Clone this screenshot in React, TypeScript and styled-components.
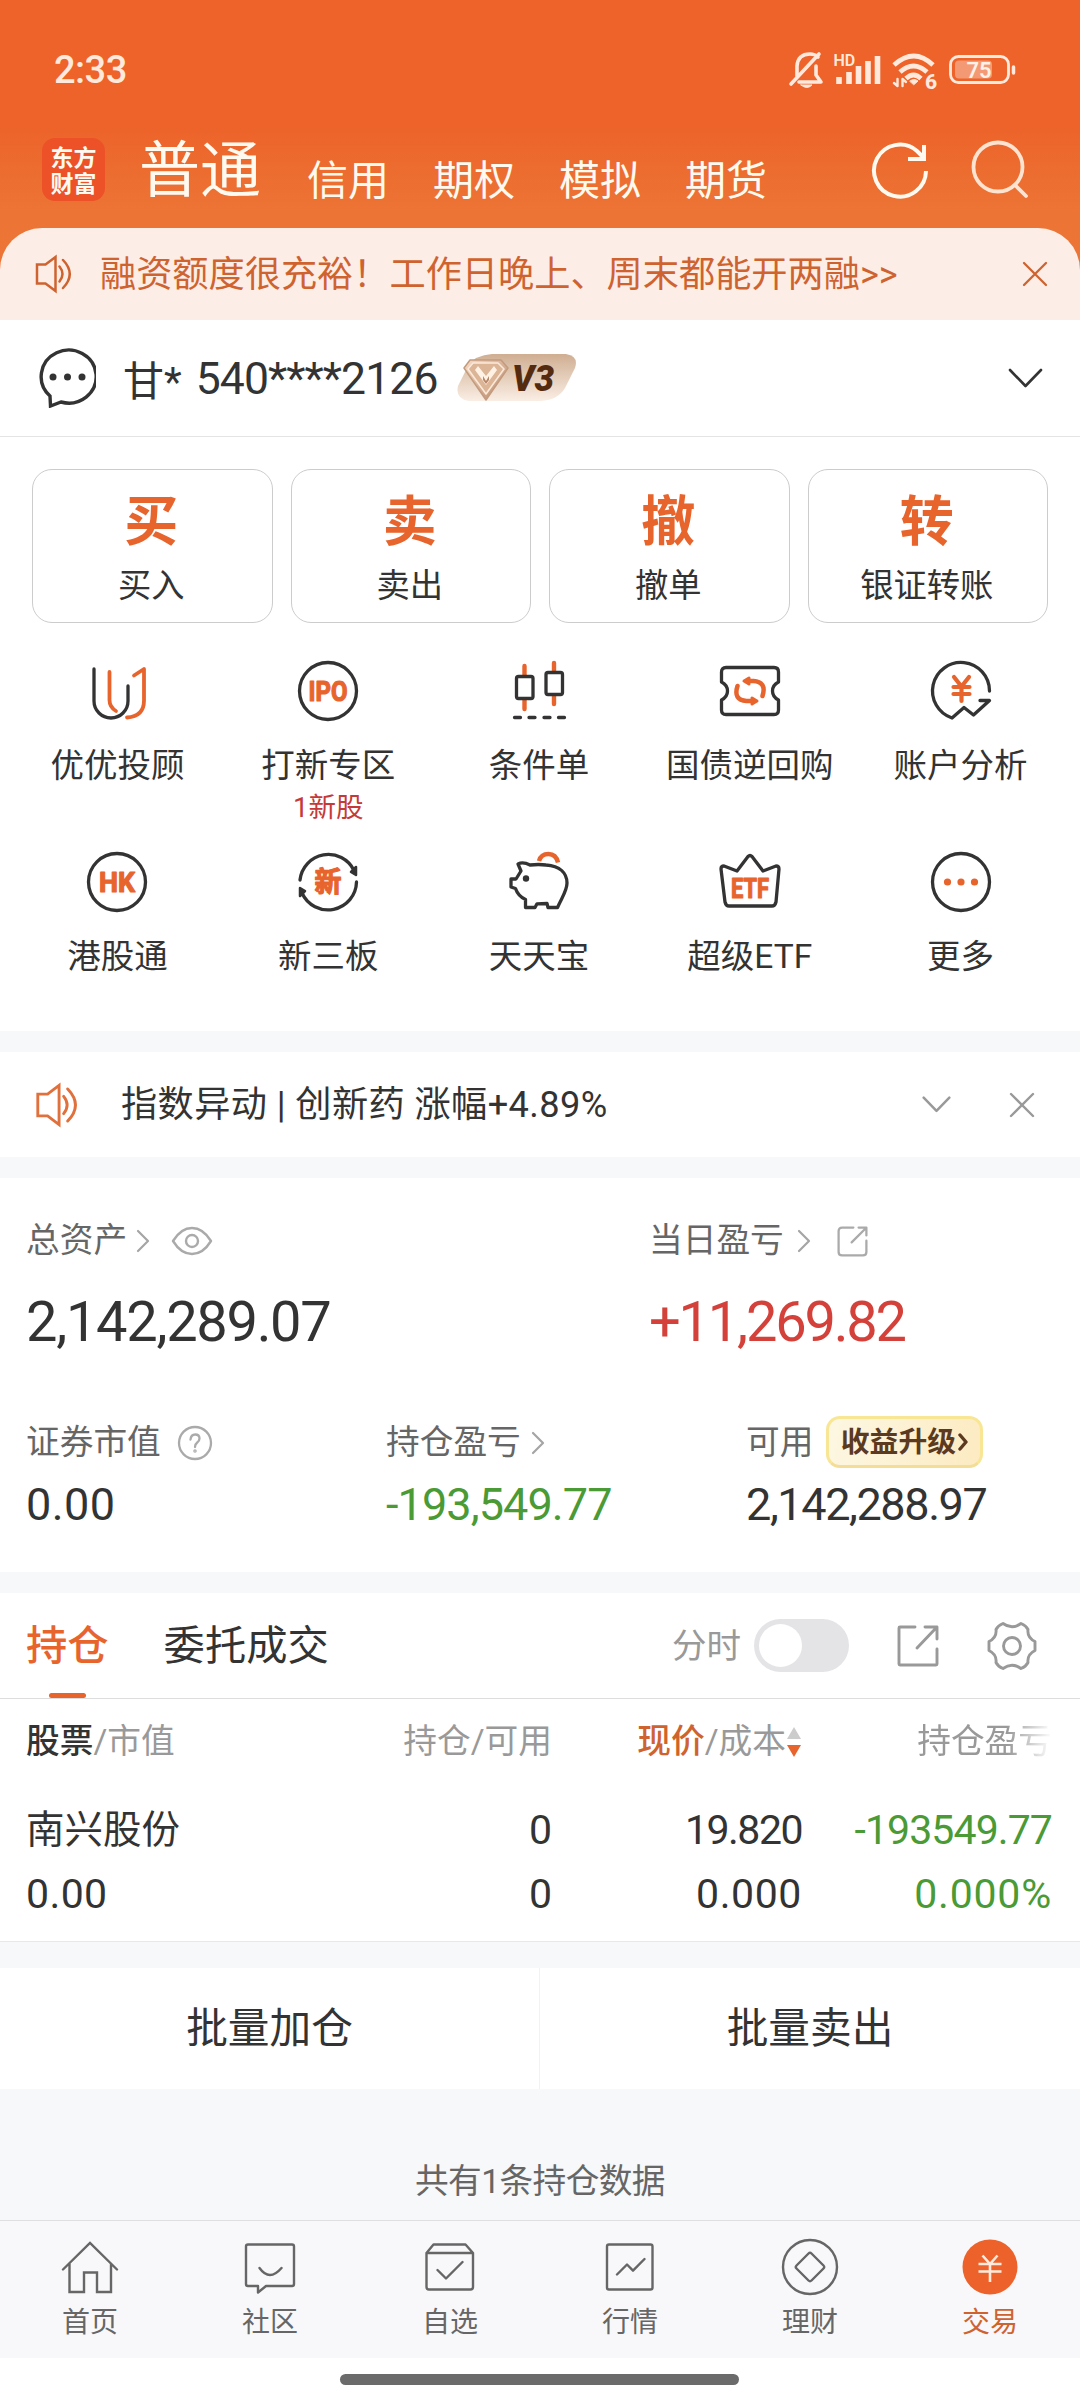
import React from "react";
import styled, { createGlobalStyle, css } from "styled-components";

const INK = "#333333";
const GREY = "#666666";
const LIGHT = "#999999";
const ORANGE = "#e8642d";
const RUST = "#cf6330";
const GREEN = "#4a9a35";
const RED = "#d4413a";
const BAND = "#f7f8fa";

const Global = createGlobalStyle`
  * { box-sizing: border-box; }
  body { margin: 0; background: #fff; }
  svg { display: block; flex: none; }
`;

const Screen = styled.div`
  width: 1080px;
  height: 2400px;
  overflow: hidden;
  display: flex;
  flex-direction: column;
  background: #fff;
  color: ${INK};
  font-family: Roboto, "Noto Sans CJK SC", sans-serif;
`;

/* ---------- header ---------- */

const Header = styled.header`
  height: 320px;
  flex: none;
  display: flex;
  flex-direction: column;
  background: linear-gradient(#ee632a 0, #ed632a 125px, #ec7535 215px, #ed7334 320px);
`;

const StatusBar = styled.div`
  height: 124px;
  padding: 16px 59px 0 54px;
  display: flex;
  align-items: center;
  justify-content: space-between;
  color: #ffe9dc;
`;

const Clock = styled.span`
  font-size: 38px;
  font-weight: 500;
  letter-spacing: -0.5px;
`;

const TopNav = styled.nav`
  height: 104px;
  padding: 0 50px 0 42px;
  display: flex;
  align-items: center;
  color: #fffaf0;
`;

const Logo = styled.div`
  width: 63px;
  height: 63px;
  margin: -14px 34px 0 0;
  border-radius: 13px;
  background: #ec5127;
  display: flex;
  flex-direction: column;
  align-items: center;
  justify-content: center;
`;

const LogoLine = styled.span`
  font: 700 23px/26px "Noto Sans CJK SC", sans-serif;
`;

const MainTab = styled.span`
  width: 168px;
  font-size: 61px;
  line-height: 90px;
  margin-top: -10px;
`;

const SubTab = styled.span`
  width: 126px;
  font-size: 41px;
  line-height: 60px;
  margin-top: 9px;
`;

const TopActions = styled.div`
  margin-left: auto;
  margin-top: -12px;
  display: flex;
  align-items: center;
  gap: 40px;
`;

const Notice = styled.div`
  height: 92px;
  padding: 0 31px 0 34px;
  border-radius: 42px 42px 0 0;
  background: #fceee7;
  color: ${RUST};
  display: flex;
  align-items: center;
`;

const NoticeText = styled.span`
  margin-left: 24px;
  padding-top: 1px;
  flex: 1;
  font-size: 36.2px;
  line-height: 60px;
  white-space: nowrap;
`;

/* ---------- account ---------- */

const AccountRow = styled.div`
  height: 117px;
  flex: none;
  padding: 0 37px 0 36px;
  border-bottom: 1px solid #e4e4e4;
  display: flex;
  align-items: center;
`;

const AccountName = styled.span`
  margin-left: 27px;
  font-size: 41px;
  white-space: pre;
`;

const AccountNumber = styled.span`
  font-size: 44.5px;
  letter-spacing: -0.9px;
  margin: 2px 18px 0 14px;
`;

const Spacer = styled.div`
  flex: 1;
`;

/* ---------- shortcuts ---------- */

const TradeGrid = styled.div`
  flex: none;
  display: grid;
  grid-template-columns: repeat(4, 1fr);
  gap: 18px;
  padding: 32px 32px 0;
`;

const TradeCard = styled.button`
  height: 154px;
  padding: 0 2px 0 0;
  border: 1px solid #cccccc;
  border-radius: 20px;
  background: #fff;
  color: inherit;
  font-family: inherit;
  display: flex;
  flex-direction: column;
  align-items: center;
`;

const TradeGlyph = styled.span`
  margin-top: 19px;
  color: ${ORANGE};
  font-size: 54px;
  font-weight: 700;
  line-height: 68px;
`;

const TradeLabel = styled.span`
  font-size: 33.3px;
  line-height: 58px;
`;

const ToolGrid = styled.div`
  flex: none;
  height: 408px;
  display: grid;
  grid-template-columns: repeat(5, 1fr);
  grid-template-rows: 191px 217px;
  padding: 0 14px 0 12px;
`;

const Tool = styled.div`
  padding-top: 36px;
  display: flex;
  flex-direction: column;
  align-items: center;
`;

const ToolLabel = styled.span`
  margin-top: 18px;
  font-size: 33.5px;
  line-height: 50px;
  white-space: nowrap;
`;

const ToolHint = styled.span`
  color: #c53a38;
  font-size: 27.5px;
  line-height: 34px;
`;

const Band = styled.div<{ $h: number; $line?: boolean }>`
  height: ${(p) => p.$h}px;
  flex: none;
  background: ${BAND};
  ${(p) => p.$line && css`border-top: 1px solid #e6e8ec;`}
`;

/* ---------- news ---------- */

const NewsRow = styled.div`
  height: 105px;
  flex: none;
  padding: 0 44px 0 33px;
  display: flex;
  align-items: center;
`;

const NewsText = styled.span`
  flex: 1;
  margin-left: 37px;
  font-size: 36.2px;
  line-height: 60px;
  letter-spacing: 0.4px;
`;

/* ---------- assets ---------- */

const Assets = styled.section`
  height: 394px;
  flex: none;
  padding: 33px 0 0 26px;
`;

const AssetGrid = styled.div<{ $cols: string; $top?: number }>`
  display: grid;
  grid-template-columns: ${(p) => p.$cols};
  margin-top: ${(p) => p.$top || 0}px;
`;

const FieldLabel = styled.div`
  height: 60px;
  display: flex;
  align-items: center;
  color: ${GREY};
  font-size: 33.7px;
  line-height: 60px;
`;

const Gap = styled.span<{ $w: number }>`
  width: ${(p) => p.$w}px;
`;

const Amount = styled.div<{ $size: number; $h: number; $ls?: number; $color?: string }>`
  font-size: ${(p) => p.$size}px;
  line-height: ${(p) => p.$h}px;
  letter-spacing: ${(p) => p.$ls || 0}px;
  color: ${(p) => p.$color || "inherit"};
  white-space: nowrap;
`;

const Upgrade = styled.span`
  width: 157px;
  height: 52px;
  margin: -2px 0 0 13px;
  border: 3px solid #f8e694;
  border-bottom-color: #f3dd97;
  border-radius: 14px;
  background: linear-gradient(100deg, #fdf7e2, #fcebc2);
  color: #5c3a20;
  font-size: 28.8px;
  font-weight: 700;
  line-height: 46px;
  display: flex;
  align-items: center;
  justify-content: center;
  gap: 2px;
`;

/* ---------- positions ---------- */

const TabBar = styled.div`
  height: 106px;
  flex: none;
  padding: 0 43px 0 26px;
  border-bottom: 1px solid #dddddd;
  display: flex;
  align-items: center;
`;

const Tab = styled.div<{ $active?: boolean }>`
  height: 105px;
  margin-right: 55px;
  padding-top: 12px;
  display: flex;
  flex-direction: column;
  align-items: center;
  justify-content: space-between;
  color: ${(p) => (p.$active ? ORANGE : INK)};
  font-size: 41.3px;
  line-height: 82px;
  font-weight: ${(p) => (p.$active ? 500 : 400)};

  &::after {
    content: "";
    width: 37px;
    height: 5px;
    border-radius: 3px;
    background: ${(p) => (p.$active ? ORANGE : "transparent")};
  }
`;

const TabNote = styled.span`
  color: ${LIGHT};
  font-size: 34.5px;
  line-height: 60px;
`;

const Toggle = styled.div`
  width: 95px;
  height: 53px;
  margin: 0 47px 0 13px;
  padding: 5px;
  border-radius: 27px;
  background: #e4e4e7;

  &::before {
    content: "";
    display: block;
    width: 43px;
    height: 43px;
    border-radius: 50%;
    background: #fff;
  }
`;

const TableRow = styled.div<{ $h: number }>`
  height: ${(p) => p.$h}px;
  padding: 0 28px 0 26px;
  display: grid;
  grid-template-columns: 276px 250px 250px 250px;
  align-items: center;
`;

const TableBody = styled.div`
  padding-top: 14px;
`;

const HeadCell = styled.div<{ $right?: boolean; $fade?: boolean }>`
  display: flex;
  align-items: center;
  justify-content: ${(p) => (p.$right ? "flex-end" : "flex-start")};
  color: ${LIGHT};
  font-size: 33.7px;
  line-height: 60px;
  padding-top: 1px;
  white-space: nowrap;
  ${(p) => p.$fade && css`mask-image: linear-gradient(90deg, #000 82%, transparent 100%);`}
`;

const Strong = styled.span<{ $color: string }>`
  color: ${(p) => p.$color};
  font-weight: 500;
`;

const Cell = styled.div<{ $right?: boolean; $color?: string; $ls?: number; $size?: number }>`
  text-align: ${(p) => (p.$right ? "right" : "left")};
  color: ${(p) => p.$color || INK};
  font-size: ${(p) => p.$size || 41}px;
  line-height: 64px;
  letter-spacing: ${(p) => p.$ls || 0}px;
  white-space: nowrap;
`;

const Positions = styled.section`
  flex: none;
  height: 242px;
`;

const BatchRow = styled.div`
  height: 121px;
  flex: none;
  display: grid;
  grid-template-columns: 540px 540px;
`;

const BatchButton = styled.button`
  border: 0;
  border-right: 1px solid #f2f2f4;
  background: #fff;
  color: ${INK};
  font: 400 41.7px/60px Roboto, "Noto Sans CJK SC", sans-serif;

  &:last-child {
    border-right: 0;
  }
`;

const Summary = styled.div`
  height: 131px;
  flex: none;
  padding-top: 63px;
  background: ${BAND};
  color: ${GREY};
  text-align: center;
  font-size: 33.7px;
  line-height: 60px;
  letter-spacing: -0.6px;
`;

/* ---------- bottom bar ---------- */

const BottomNav = styled.nav`
  height: 138px;
  flex: none;
  border-top: 1px solid #dfdfe2;
  background: #f8f8fa;
  display: grid;
  grid-template-columns: repeat(6, 1fr);
`;

const NavItem = styled.div<{ $active?: boolean }>`
  padding-top: 16px;
  display: flex;
  flex-direction: column;
  align-items: center;
  color: ${(p) => (p.$active ? RUST : GREY)};
  font-size: 28px;
  line-height: 52px;
`;

const HomeArea = styled.div`
  flex: 1;
  display: flex;
  justify-content: center;
  padding: 16px 1px 0 0;

  &::after {
    content: "";
    width: 399px;
    height: 11px;
    border-radius: 6px;
    background: #6b6b6b;
  }
`;

/* ---------- drawings ---------- */

type IconProps = { w: number; h: number; sw?: number; color?: string; box?: string; children: React.ReactNode };

const Icon = ({ w, h, sw = 3, color = "currentColor", box, children }: IconProps) => (
  <svg
    width={w}
    height={h}
    viewBox={box || `0 0 ${w} ${h}`}
    fill="none"
    stroke={color}
    strokeWidth={sw}
    strokeLinecap="round"
    strokeLinejoin="round"
  >
    {children}
  </svg>
);

const StatusIcons = () => (
  <svg width="234" height="56" viewBox="786 42 234 56" fill="none" stroke="#ffe9dc" strokeLinecap="round" strokeLinejoin="round">
    <path d="M796 77V66q1-12 13-12 5 0 8 3M790 84l28-30M798 82h22l-5-7V66" strokeWidth="3.6" />
    <path d="M800 85h11q-5 5-11 0z" fill="#ffe9dc" strokeWidth="1" />
    <text x="832.5" y="66" fill="#ffe9dc" stroke="none" fontFamily="Roboto, sans-serif" fontSize="16" fontWeight="600">HD</text>
    <g strokeWidth="5.600" strokeLinecap="butt">
      <path d="M838 84v-7M848 84V72M857.500 84V66M867 84V61M876.500 84V56" />
    </g>
    <path d="M893 65q20-18 39 0M899 72q13.500-12 27 0M905 78.500q7.500-7 15 0" strokeWidth="4.800" strokeLinecap="butt" />
    <path d="M909 81q4-3 8 0l-4 3.500z" fill="#ffe9dc" strokeWidth="1" />
    <path d="M896.500 79v7l-3.500-3M901.500 86v-7l3.500 3" strokeWidth="2.400" />
    <text x="924" y="89" fill="#ffe9dc" stroke="#ed632a" strokeWidth="1.500" paintOrder="stroke" fontFamily="Roboto, sans-serif" fontSize="21" fontWeight="800">6</text>
    <rect x="949.500" y="56.500" width="58" height="26" rx="8" strokeWidth="2.800" />
    <rect x="954" y="60.500" width="37" height="18" rx="4" fill="#f39a74" stroke="none" />
    <text x="965.500" y="78" fill="#fff1e8" stroke="none" fontFamily="Roboto, sans-serif" fontSize="22" fontWeight="600">75</text>
    <path d="M1012.500 67v6" strokeWidth="3.500" />
  </svg>
);

const Speaker = ({ w, h, color }: { w: number; h: number; color: string }) => (
  <Icon w={w} h={h} box="0 0 42 40" sw={2.5} color={color}>
    <path d="M3 10.500h8.500L21.500 3v34l-10-7.500H3zM25.500 12.500q6 7.500 0 15M29 6q13.500 14 0 28" strokeLinejoin="miter" />
  </Icon>
);

const Cross = ({ size, sw, color }: { size: number; sw: number; color: string }) => (
  <Icon w={size} h={size} box="0 0 28 28" sw={sw} color={color}>
    <path d="M3 3l22 22M25 3L3 25" />
  </Icon>
);

const ChevronDown = ({ w, color, sw }: { w: number; color: string; sw: number }) => (
  <Icon w={w} h={w * 0.6} box="0 0 35 21" sw={sw} color={color}>
    <path d="M2 2l15.500 16L33 2" />
  </Icon>
);

const ChevronRight = () => (
  <Icon w={15} h={24} sw={2.2} color="#a5a5a5">
    <path d="M2 2l10 10L2 22" />
  </Icon>
);

const Gem = () => (
  <svg width="122" height="50" viewBox="0 0 122 50">
    <defs>
      <linearGradient id="gold" x1="0" y1="0" x2="0" y2="1">
        <stop offset="0" stopColor="#cfae91" />
        <stop offset="1" stopColor="#faeee4" />
      </linearGradient>
      <linearGradient id="gem" x1="0" y1="0" x2="1" y2="1">
        <stop offset="0" stopColor="#f7dcc6" />
        <stop offset="1" stopColor="#b98767" />
      </linearGradient>
    </defs>
    <path d="M36 1h74q13 2 9 14l-10 20q-7 12-24 13H13Q-1 46 2 33L12 13Q19 2 36 1z" fill="url(#gold)" />
    <path d="M14 7h31l7 8-22 32L8 15z" fill="url(#gem)" stroke="#c39b7f" strokeWidth="1.500" strokeLinejoin="round" />
    <path d="M17 10h25l6 6-18 25L12 16z" fill="#dcb496" stroke="#fbe9da" strokeWidth="1.600" strokeLinejoin="round" />
    <path d="M22 13l8 10 8-10 3 4-11 15-11-15z" fill="#fff2e5" />
    <path d="M27 23l3 5 3-5v4l-3 4-3-4z" fill="#b98767" />
    <text x="56" y="37.500" fill="#552b10" fontFamily="Roboto, sans-serif" fontStyle="italic" fontWeight="900" fontSize="37" textLength="42" lengthAdjust="spacingAndGlyphs">V3</text>
  </svg>
);

const share = "M20 3H7Q3 3 3 7v24q0 4 4 4h24q4 0 4-4V18M26 3h9v9M34 4L18 20";

const Share = ({ size, sw, color }: { size: number; sw: number; color: string }) => (
  <Icon w={size} h={size} box="0 0 38 38" sw={sw} color={color}>
    <path d={share} />
  </Icon>
);

const Badge = ({ text, width, size = 28, y = 42 }: { text: string; width: number; size?: number; y?: number }) => (
  <text
    x="32"
    y={y}
    textAnchor="middle"
    textLength={width}
    lengthAdjust="spacingAndGlyphs"
    fill={ORANGE}
    stroke={ORANGE}
    strokeWidth="1.2"
    fontFamily='Roboto, "Noto Sans CJK SC", sans-serif'
    fontWeight="700"
    fontSize={size}
  >
    {text}
  </text>
);

const Ring = () => <circle cx="32" cy="32" r="28.500" />;

const toolArt: Record<string, React.ReactNode> = {
  advisor: (
    <>
      <path d="M9 10v32a17 17 0 0 0 34 0V27" />
      <g stroke={ORANGE} strokeWidth="3.800">
        <path d="M24.500 13v28q0 7 6.500 11M42 58.500q17-1 17-17V10l-10 6.500" />
      </g>
    </>
  ),
  ipo: (<><Ring /><Badge text="IPO" width={39} /></>),
  candles: (
    <>
      <path d="M17.500 7v9M17.500 41v9M47 4v8M47 37v8" stroke={ORANGE} strokeWidth="4.400" />
      <rect x="9.500" y="17.500" width="16.500" height="22" rx="2" />
      <rect x="39" y="13.500" width="16.500" height="22" rx="2" />
      <path d="M7.500 58.500h6M22 58.500h6M37 58.500h6M51.500 58.500h6" />
    </>
  ),
  repo: (
    <>
      <path d="M8 8.500h48q4.500 0 4.500 4.500v10q-6 3-6 9t6 9v10q0 4.500-4.500 4.500H8Q3.500 55.500 3.500 51V41q6-3 6-9t-6-9V13Q3.500 8.500 8 8.500z" />
      <g stroke={ORANGE} strokeWidth="4.500">
        <path d="M19.500 27q-4.500 14 9 15h7M44.500 37q4.500-14-9-15h-6" />
        <path d="M31 19v6l-5-3zM34 39v6l5-3z" fill={ORANGE} strokeWidth="3" />
      </g>
    </>
  ),
  analysis: (
    <>
      <path d="M60.500 32A28.500 28.500 0 1 0 23 59l12-10.500 9.500 7.500L60.500 41.500H51" />
      <path d="M25 18l7.500 9.500L40 18M32.500 28v14M24.500 28h16M24.500 35h16" stroke={ORANGE} strokeWidth="4.200" />
    </>
  ),
  hk: (<><Ring /><Badge text="HK" width={36} /></>),
  neeq: (
    <>
      <path d="M4 30A28.500 28.500 0 0 1 58 20.500M60.500 32A28.500 28.500 0 0 1 6 43" />
      <path d="M60 17v8l-5-3zM4 46v-8l5 3z" fill={INK} strokeWidth="2.500" />
      <Badge text="新" width={27} size={28} y={42} />
    </>
  ),
  piggy: (
    <>
      <path d="M11 14q5-2.500 12 1 9-1 16 0c14 1 21 8 21 18 0 8-5 14-9.500 24.500H41l-1-4-10 .3-2 3.700h-9.500v-8Q11 46 8.500 38.500L4 37v-8h5l5-8z" />
      <circle cx="19" cy="28.500" r="3.200" fill={INK} stroke="none" />
      <path d="M32 11q2-7 9.500-7T51 12.500" stroke={ORANGE} strokeWidth="4.500" strokeLinecap="butt" />
    </>
  ),
  etf: (
    <>
      <path d="M30 6.500q2-2 4 0l11 14.500 13-5q3 0 3 3L58 52q-1 4-4 4H11q-3 0-4-4L3 19q0-3 3-3l13 5z" />
      <Badge text="ETF" width={38} y={47.500} size={27} />
    </>
  ),
  more: (
    <>
      <Ring />
      <g fill={ORANGE} stroke="none">
        <circle cx="18.500" cy="32" r="3.600" />
        <circle cx="32" cy="32" r="3.600" />
        <circle cx="45.500" cy="32" r="3.600" />
      </g>
    </>
  ),
};

const tools = [
  { art: "advisor", label: "优优投顾" },
  { art: "ipo", label: "打新专区", hint: "1新股" },
  { art: "candles", label: "条件单" },
  { art: "repo", label: "国债逆回购" },
  { art: "analysis", label: "账户分析" },
  { art: "hk", label: "港股通" },
  { art: "neeq", label: "新三板" },
  { art: "piggy", label: "天天宝" },
  { art: "etf", label: "超级ETF" },
  { art: "more", label: "更多" },
];

const trades = [
  ["买", "买入"],
  ["卖", "卖出"],
  ["撤", "撤单"],
  ["转", "银证转账"],
];

const navs: { label: string; active?: boolean; art: React.ReactNode }[] = [
  { label: "首页", art: <path d="M3 32.500L30 6l27 26.500M9.500 27v28H24V35.500h13V55h14V27" strokeLinejoin="miter" /> },
  { label: "社区", art: <path d="M8 7.500h44q2 0 2 2V47q0 2-2 2H26l-8 6.500V49H8q-2 0-2-2V9.500q0-2 2-2zM19.500 31q10 14 22 0" /> },
  { label: "自选", art: <path d="M6.500 16l7-8.500h32l7.500 8.500v34q0 2.500-2.500 2.500H9Q6.500 52.500 6.500 50zh46M17.500 33l8.500 8.500L42.500 25" /> },
  { label: "行情", art: <path d="M9 7.500h41.500q2 0 2 2v41q0 2-2 2H9q-2 0-2-2v-41q0-2 2-2zM17 37.500l10-10 6 6.200L44.500 22" /> },
  { label: "理财", art: <><circle cx="30" cy="30" r="27" /><path d="M28.500 16.500q1.500-1.500 3 0l12 12q1.500 1.500 0 3l-12 12q-1.500 1.500-3 0l-12-12q-1.500-1.500 0-3z" /></> },
  {
    label: "交易",
    active: true,
    art: (
      <>
        <circle cx="30" cy="30" r="27.500" fill="#ec622a" stroke="none" />
        <path d="M22.500 18.500L30 27l7.500-8.500M30 27v18M18.500 27h23M18.500 34.500h23" stroke="#ffeadd" strokeWidth="2.600" strokeLinecap="butt" />
      </>
    ),
  },
];

export default function App() {
  return (
    <Screen>
      <Global />
      <Header>
        <StatusBar>
          <Clock>2:33</Clock>
          <StatusIcons />
        </StatusBar>
        <TopNav>
          <Logo>
            <LogoLine>东方</LogoLine>
            <LogoLine>财富</LogoLine>
          </Logo>
          <MainTab>普通</MainTab>
          {["信用", "期权", "模拟", "期货"].map((t) => (
            <SubTab key={t}>{t}</SubTab>
          ))}
          <TopActions>
            <Icon w={60} h={60} sw={4}>
              <path d="M56 31A26 26 0 1 1 47 11l7 7M54 5v14H38" strokeLinecap="butt" strokeLinejoin="miter" />
            </Icon>
            <Icon w={60} h={60} sw={3.8} color="#fde3d0">
              <circle cx="28" cy="27" r="24.500" />
              <path d="M45 45l11 11" />
            </Icon>
          </TopActions>
        </TopNav>
        <Notice>
          <Speaker w={42} h={40} color={RUST} />
          <NoticeText>融资额度很充裕！工作日晚上、周末都能开两融&gt;&gt;</NoticeText>
          <Cross size={28} sw={2.3} color={RUST} />
        </Notice>
      </Header>

      <AccountRow>
        <Icon w={60} h={60} sw={3.4} color={INK}>
          <path d="M14 48A27.500 26.500 0 1 1 25 54L14.500 58z" strokeLinejoin="miter" />
          <g fill={INK} stroke="none">
            <circle cx="17" cy="29" r="3.500" />
            <circle cx="31.500" cy="29" r="3.500" />
            <circle cx="46" cy="29" r="3.500" />
          </g>
        </Icon>
        <AccountName>甘*</AccountName>
        <AccountNumber>540****2126</AccountNumber>
        <Gem />
        <Spacer />
        <ChevronDown w={35} sw={2.6} color={INK} />
      </AccountRow>

      <TradeGrid>
        {trades.map(([glyph, label]) => (
          <TradeCard key={label}>
            <TradeGlyph>{glyph}</TradeGlyph>
            <TradeLabel>{label}</TradeLabel>
          </TradeCard>
        ))}
      </TradeGrid>

      <ToolGrid>
        {tools.map((t) => (
          <Tool key={t.label}>
            <Icon w={64} h={64} sw={3.3} color={INK}>{toolArt[t.art]}</Icon>
            <ToolLabel>{t.label}</ToolLabel>
            {t.hint && <ToolHint>{t.hint}</ToolHint>}
          </Tool>
        ))}
      </ToolGrid>

      <Band $h={21} />
      <NewsRow>
        <Speaker w={51} h={46} color="#e0703c" />
        <NewsText>指数异动 | 创新药 涨幅+4.89%</NewsText>
        <ChevronDown w={29} sw={3} color={LIGHT} />
        <Gap $w={57} />
        <Cross size={28} sw={2.4} color={LIGHT} />
      </NewsRow>
      <Band $h={21} />

      <Assets>
        <AssetGrid $cols="623px 1fr">
          <FieldLabel>
            总资产<Gap $w={9} /><ChevronRight /><Gap $w={20} />
            <Icon w={42} h={30} sw={2.4} color="#aaaaaa">
              <path d="M2 15Q10 2 21 2t19 13Q32 28 21 28T2 15z" />
              <circle cx="21" cy="15" r="6" />
            </Icon>
          </FieldLabel>
          <FieldLabel>
            当日盈亏<Gap $w={13} /><ChevronRight /><Gap $w={24} />
            <Share size={33} sw={2.6} color="#aaaaaa" />
          </FieldLabel>
          <Amount $size={56} $h={102} $ls={-1.3}>2,142,289.07</Amount>
          <Amount $size={56} $h={102} $ls={-2.2} $color={RED}>+11,269.82</Amount>
        </AssetGrid>
        <AssetGrid $cols="360px 360px 1fr" $top={40}>
          <FieldLabel>
            证券市值<Gap $w={16} />
            <Icon w={36} h={36} sw={2.3} color="#aaaaaa">
              <circle cx="18" cy="18" r="16" />
              <path d="M13.500 14.500q.5-5 4.700-5 4.300 0 4.300 4 0 2.500-2.500 4.300-2 1.500-2 4.200" />
              <circle cx="18" cy="26" r="0.600" />
            </Icon>
          </FieldLabel>
          <FieldLabel>持仓盈亏<Gap $w={10} /><ChevronRight /></FieldLabel>
          <FieldLabel>
            可用
            <Upgrade>
              收益升级
              <Icon w={11} h={22} sw={3.4}><path d="M2 4l6 7-6 7" /></Icon>
            </Upgrade>
          </FieldLabel>
          <Amount $size={45} $h={64} $ls={0.4}>0.00</Amount>
          <Amount $size={45} $h={64} $ls={-0.9} $color={GREEN}>-193,549.77</Amount>
          <Amount $size={45} $h={64} $ls={-1.4}>2,142,288.97</Amount>
        </AssetGrid>
      </Assets>
      <Band $h={21} />

      <TabBar>
        <Tab $active>持仓</Tab>
        <Tab>委托成交</Tab>
        <Spacer />
        <TabNote>分时</TabNote>
        <Toggle />
        <Icon w={44} h={44} sw={2.9} color={LIGHT}>
          <path d="M19 3H4q-1 0-1 1v36q0 1 1 1h36q1 0 1-1V25M29 3h12v12M40 4L21 24" />
        </Icon>
        <Gap $w={47} />
        <Icon w={50} h={50} sw={2.9} color={LIGHT}>
          <path d="M16 2.500Q25 9 34 2.500q5 2 7 6-1 8 7 12v9q-8 4-7 12-2 4-7 6-9-6.500-18 0-5-2-7-6 1-8-7-12v-9q8-4 7-12 2-4 7-6z" />
          <circle cx="25" cy="25" r="8.500" />
        </Icon>
      </TabBar>

      <Positions>
        <TableRow $h={85}>
          <HeadCell><Strong $color={INK}>股票</Strong>/市值</HeadCell>
          <HeadCell $right>持仓/可用</HeadCell>
          <HeadCell $right>
            <Strong $color={RUST}>现价</Strong>/成本
            <svg width="16" height="32" viewBox="0 0 16 32">
              <path d="M8 1l7 12H1z" fill="#cccccc" />
              <path d="M8 31l7-12H1z" fill={ORANGE} />
            </svg>
          </HeadCell>
          <HeadCell $right $fade>持仓盈亏</HeadCell>
        </TableRow>
        <TableBody>
          <TableRow $h={64}>
            <Cell $size={38.5}>南兴股份</Cell>
            <Cell $right>0</Cell>
            <Cell $right $ls={-1.5}>19.820</Cell>
            <Cell $right $color={GREEN} $ls={-0.9}>-193549.77</Cell>
          </TableRow>
          <TableRow $h={64}>
            <Cell $ls={0.4}>0.00</Cell>
            <Cell $right>0</Cell>
            <Cell $right $ls={0.6}>0.000</Cell>
            <Cell $right $color={GREEN} $ls={0.8}>0.000%</Cell>
          </TableRow>
        </TableBody>
      </Positions>
      <Band $h={27} $line />

      <BatchRow>
        <BatchButton>批量加仓</BatchButton>
        <BatchButton>批量卖出</BatchButton>
      </BatchRow>
      <Summary>共有1条持仓数据</Summary>

      <BottomNav>
        {navs.map((n) => (
          <NavItem key={n.label} $active={n.active}>
            <Icon w={60} h={60} sw={2.4}>{n.art}</Icon>
            {n.label}
          </NavItem>
        ))}
      </BottomNav>
      <HomeArea />
    </Screen>
  );
}
